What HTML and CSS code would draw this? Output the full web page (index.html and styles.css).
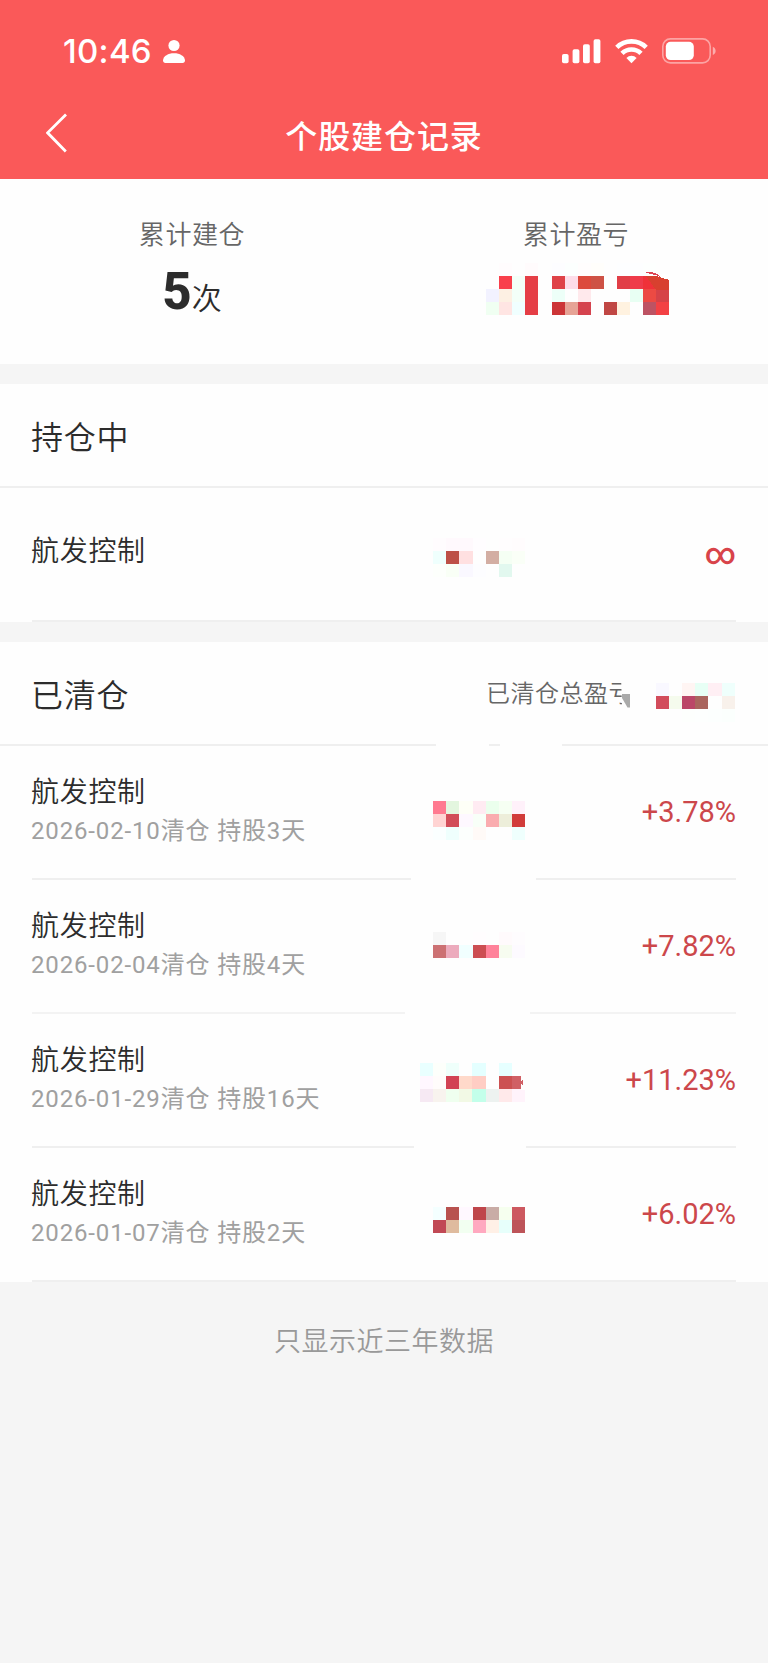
FILE: index.html
```
<!DOCTYPE html>
<html lang="zh-CN">
<head>
  <meta charset="UTF-8" />
  <meta name="viewport" content="width=device-width, initial-scale=1.0" />
  <title>个股建仓记录</title>
  <link rel="stylesheet" href="styles.css">
</head>
<body>
  <header class="header">
    <div class="status-bar">
      <div class="status-left">
        <span class="time">10:46</span>
        <svg class="person" width="22" height="24" viewBox="0 0 22 24" fill="#fff">
          <circle cx="11" cy="6.5" r="5.6" />
          <path d="M0 21.2C0.6 17 5 14.3 11 14.3S21.4 17 22 21.2C22 23 21 24 19.6 24H2.4C1 24 0 23 0 21.2Z" />
        </svg>
      </div>
      <div class="status-right">
        <svg width="39" height="25" viewBox="0 0 39 25" fill="#fff">
          <rect x="0" y="15" width="6.6" height="9.3" rx="1.8" />
          <rect x="10.6" y="10.3" width="6.8" height="14" rx="1.8" />
          <rect x="21" y="5.3" width="6.8" height="19" rx="1.8" />
          <rect x="31.6" y="0.3" width="6.8" height="24" rx="1.8" />
        </svg>
        <svg class="wifi" width="33" height="25" viewBox="0 0 33 25" fill="none" stroke="#fff" stroke-width="4.6">
          <path d="M1.8 8.4A21 21 0 0 1 31.2 8.4" />
          <path d="M7 14.4A13.4 13.4 0 0 1 26 14.4" />
          <path d="M16.5 24.2L11.4 18.9A7.4 7.4 0 0 1 21.6 18.9Z" fill="#fff" stroke="none" />
        </svg>
        <svg class="battery" width="54" height="26" viewBox="0 0 54 26">
          <rect x="0.8" y="0.9" width="47.4" height="24" rx="7.6" fill="none" stroke="#fff" stroke-opacity="0.45" stroke-width="1.6" />
          <rect x="3.8" y="3.8" width="28" height="18.3" rx="4.8" fill="#fff" />
          <path d="M50.8 8.8C54.6 10.4 54.6 15.4 50.8 17Z" fill="#fff" fill-opacity="0.5" />
        </svg>
      </div>
    </div>
    <div class="nav-bar">
      <svg class="back" width="22" height="40" viewBox="0 0 22 40" fill="none" stroke="#fff" stroke-width="2.8">
        <path d="M20 1.5L1.6 19.8L19.8 38.5" />
      </svg>
      <h1 class="title">个股建仓记录</h1>
    </div>
  </header>

  <section class="summary">
    <div class="summary-item">
      <div class="summary-label">累计建仓</div>
      <div class="summary-value"><b>5</b>次</div>
    </div>
    <div class="summary-item">
      <div class="summary-label">累计盈亏</div>
      <svg class="mosaic" width="240" height="70" data-x="30" data-y="9.7"
        data-cells="- fffcfd - fffbfc - fdfdff fcfffe fffdfd fffefb - fdfeff fdfeff fdfffe -/- f93f4b f3fff8 e53e46 - df4248 fddde9 dc4a3d ce5245 - e13e47 ef3b4a f03139 d8402f/f2f2ff fdf0e3 f3fff8 e53e46 - edfff8 - ffe9ec - - - e8fff3 ec4a43 d64248/f0fff2 ffe5e3 f0ffff e53e46 - cc3537 e6a396 d5434e - c04744 fff2e0 - bd5363 f34144">
        <path d="M190 20.5H214V28L198 23.5Z" fill="#fff" />
        <path d="M190 23H200L213.4 27V37H200Z" fill="#d8402f" />
        <path d="M190 19.6C196 18 203 20.5 204 24C200 21.6 196 21.4 190 19.6Z" fill="#dd4454" />
      </svg>
    </div>
  </section>

  <section class="card">
    <div class="card-head">
      <h2>持仓中</h2>
    </div>
    <div class="line full"></div>
    <div class="row">
      <div class="stock">
        <div class="stock-name">航发控制</div>
      </div>
      <svg class="mosaic" width="132" height="132" data-x="13.2" data-y="49.7"
        data-cells="fffcfe fff9fd fff9fd fffdff - fffdfe fffcfd/effffd bd5047 ffe0e1 - d3aea3 f5fff4 fafff7/fdfffc f9fff6 faf8ff fdfdff - e2f8ef -"></svg>
      <div class="rate infinite">∞</div>
    </div>
    <div class="line"></div>
  </section>

  <section class="card">
    <div class="card-head">
      <h2>已清仓</h2>
      <div class="total">
        <span>已清仓总盈亏</span>
        <svg class="smudge" width="26" height="36" viewBox="0 0 26 36">
          <path d="M11 0H26V36H0V31H12Z" fill="#fefefe" />
          <path d="M12 18H20V31.5H17.5L12 22Z" fill="#aaa" />
        </svg>
      </div>
      <svg class="mosaic" width="93" height="102" data-x="14" data-y="40.7"
        data-cells="f9f8ff - fff5f3 e7fff5 ffeff4 effffc/d24c5b f5fbed bb4768 aa655e - f8f1eb/- - fdfffd fdfffe fcfffe fbfffd"></svg>
    </div>
    <div class="line full cut-1"></div>
    <div class="row">
      <div class="stock">
        <div class="stock-name">航发控制</div>
        <div class="stock-info">2026-02-10清仓 持股3天</div>
      </div>
      <svg class="mosaic" width="132" height="132" data-x="13.2" data-y="54.7"
        data-cells="ff7a90 e3f6df fefff7 ffebf2 ebffed f6fff3 fff1fa/ffd4d3 d24d59 fef8ff f8fff8 faacaf edeeda d13c3a/fbffff effffd fcfffd fffaf7 - - effffd"></svg>
      <div class="rate">+3.78%</div>
    </div>
    <div class="line cut-2"></div>
    <div class="row">
      <div class="stock">
        <div class="stock-name">航发控制</div>
        <div class="stock-info">2026-02-04清仓 持股4天</div>
      </div>
      <svg class="mosaic" width="132" height="132" data-x="13.2" data-y="52.2"
        data-cells="f6f6f6 - - fffdfe - fffafc fefcfe/cc7173 ecabbd f1ffff cc4e52 ff829a f7fcf0 fdfaff"></svg>
      <div class="rate">+7.82%</div>
    </div>
    <div class="line cut-3"></div>
    <div class="row">
      <div class="stock">
        <div class="stock-name">航发控制</div>
        <div class="stock-info">2026-01-29清仓 持股16天</div>
      </div>
      <svg class="mosaic" width="132" height="132" data-x="0" data-y="49"
        data-cells="e9ffff fdfffb effffb - e4ffff - e6ffff/fff7ff fffcfb d24354 ffd9ca ffcdc4 - cc5152 d06065/f6e9f3 f8f3ee efffef f2f9e5 c3ffea edf2f0 ffe9ea fff3fb">
        <path d="M101 61H106V76H101V69.5H103V67.5H101Z" fill="#fefefe" />
        <path d="M101 68L103 65V71L101 70Z" fill="#d06065" />
      </svg>
      <div class="rate">+11.23%</div>
    </div>
    <div class="line cut-4"></div>
    <div class="row">
      <div class="stock">
        <div class="stock-name">航发控制</div>
        <div class="stock-info">2026-01-07清仓 持股2天</div>
      </div>
      <svg class="mosaic" width="132" height="132" data-x="13.2" data-y="59.2"
        data-cells="f4ffff b8524f fff8ff bf464b c9aca6 f6ffef cd5960/c14955 dfbb9e f2fff1 ffa9c0 fff0e6 e7fffb bd5459"></svg>
      <div class="rate">+6.02%</div>
    </div>
    <div class="line"></div>
  </section>

  <footer class="footer">只显示近三年数据</footer>

  <script>
    // privacy mosaic: rows split by "/", "-" is an empty cell
    const CELL = 13.1;

    document.querySelectorAll('.mosaic').forEach(svg => {
      const x0 = Number(svg.dataset.x);
      const y0 = Number(svg.dataset.y);
      const group = document.createElementNS('http://www.w3.org/2000/svg', 'g');

      svg.dataset.cells.split('/').forEach((line, r) => {
        line.trim().split(/\s+/).forEach((color, c) => {
          if (color === '-') return;
          const rect = document.createElementNS('http://www.w3.org/2000/svg', 'rect');
          rect.setAttribute('x', x0 + c * CELL);
          rect.setAttribute('y', y0 + r * CELL);
          rect.setAttribute('width', CELL);
          rect.setAttribute('height', CELL);
          rect.setAttribute('fill', '#' + color);
          group.appendChild(rect);
        });
      });
      svg.prepend(group);
    });
  </script>
</body>
</html>
```
FILE: styles.css
```
* { box-sizing: border-box; }
body {
  margin: 0;
  min-height: 1663px;
  background: #f5f5f5;
  color: #2c2c2c;
  font-family: Roboto, "Noto Sans CJK SC", sans-serif;
}
h1, h2 {
  margin: 0;
  font-weight: 400;
}
svg {
  display: block;
  flex-shrink: 0;
}
.header {
  height: 179px;
  background: #fa5959;
  color: #fff;
}
.status-bar {
  height: 102px;
  padding: 0 52px 0 63px;
  display: flex;
  justify-content: space-between;
  align-items: center;
}
.status-left, .status-right {
  display: flex;
  align-items: center;
}
.time {
  font-family: Inter, sans-serif;
  font-size: 33px;
  font-weight: 550;
  letter-spacing: 0.3px;
  line-height: 40px;
}
.person {
  margin-left: 11px;
}
.wifi {
  margin-left: 14px;
}
.battery {
  margin-left: 14px;
}
.nav-bar {
  height: 77px;
  padding: 0 46px;
  display: grid;
  grid-template-columns: 22px 1fr 22px;
}
.back {
  margin-top: 11px;
}
.title {
  font-size: 32px;
  font-weight: 500;
  letter-spacing: 0.9px;
  line-height: 70px;
  text-align: center;
}
.summary {
  height: 185px;
  padding-top: 38px;
  background: #fefefe;
  display: grid;
  grid-template-columns: 1fr 1fr;
}
.summary-item {
  display: flex;
  flex-direction: column;
  align-items: center;
}
.summary-label {
  font-size: 26px;
  font-weight: 350;
  letter-spacing: 0.6px;
  line-height: 36px;
  color: #666;
}
.summary-value {
  font-size: 30px;
  font-weight: 350;
  line-height: 77px;
}
.summary-value b {
  font-size: 51px;
  font-weight: 800;
}
.mosaic {
  shape-rendering: crispEdges;
}
.card {
  margin-top: 20px;
  background: #fefefe;
}
.card-head {
  height: 102px;
  padding: 0 33px 0 31px;
  display: grid;
  grid-template-columns: 455px 1fr 93px;
  align-items: center;
}
.card-head h2 {
  padding-top: 5px;
  font-size: 32px;
  font-weight: 350;
  letter-spacing: 0.7px;
  line-height: 44px;
}
.total {
  position: relative;
  padding-top: 2px;
  font-size: 24px;
  font-weight: 350;
  letter-spacing: 0.5px;
  line-height: 36px;
  color: #666;
  white-space: nowrap;
}
/* covers the tail of the label */
.smudge {
  position: absolute;
  left: 124px;
  top: 2px;
}
.line {
  height: 2px;
  margin: 0 32px;
  background: #efefef;
}
.line.full {
  margin: 0;
}
.cut-1 {
  background: linear-gradient(to right, #efefef 436px, #fefefe 436px 489px, #efefef 489px 500px, #fefefe 500px 562px, #efefef 562px);
}
.cut-2 {
  background: linear-gradient(to right, #efefef 379px, #fefefe 379px 504px, #efefef 504px);
}
.cut-3 {
  background: linear-gradient(to right, #f3f3f3 373px, #fefefe 373px 498px, #f3f3f3 498px);
}
.cut-4 {
  background: linear-gradient(to right, #efefef 382px, #fefefe 382px 494px, #efefef 494px);
}
.row {
  height: 132px;
  padding: 0 32px 0 31px;
  display: grid;
  grid-template-columns: 389px 132px 1fr;
  align-items: center;
}
.stock {
  padding-bottom: 4px;
}
.stock-name {
  font-size: 28px;
  font-weight: 350;
  letter-spacing: 0.7px;
  line-height: 38px;
}
.stock-info {
  margin-top: 3px;
  font-size: 24px;
  letter-spacing: 0.85px;
  line-height: 32px;
  color: #a0a0a0;
}
.rate {
  font-size: 29px;
  line-height: 36px;
  text-align: right;
  color: #cc474b;
}
.infinite {
  padding-bottom: 1px;
  font-size: 30px;
  font-weight: 500;
  color: #d8434a;
}
.footer {
  padding-top: 41px;
  font-size: 27px;
  font-weight: 350;
  letter-spacing: 0.5px;
  line-height: 38px;
  text-align: center;
  color: #999;
}
```
